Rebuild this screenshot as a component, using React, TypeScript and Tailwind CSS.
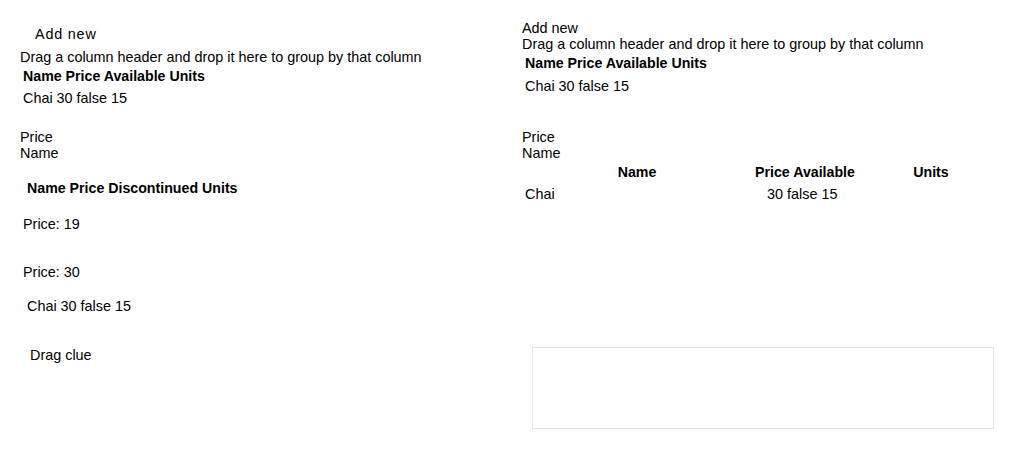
import React from 'react';

const columns = ['Name', 'Price', 'Available', 'Units'];

const App: React.FC = () => {
	return (
		<div className="min-h-screen bg-white px-[20px] text-[14.4px] leading-4 text-black [font-family:'Liberation_Sans',Arial,sans-serif]">
			{/* Top: toolbars + simple grids */}
			<div className="grid h-[129px] grid-cols-2 gap-x-[20px]">
				<div className="pt-[26px]">
					<button className="block pl-[15px] tracking-[0.8px]">Add new</button>
					<div className="mt-[7px]">Drag a column header and drop it here to group by that column</div>
					<div className="mt-[3px] pl-[3px] text-[14.2px] font-bold">{columns.join(' ')}</div>
					<div className="mt-[6px] pl-[3px]">Chai 30 false 15</div>
				</div>
				<div className="pt-[20px]">
					<button className="block">Add new</button>
					<div>Drag a column header and drop it here to group by that column</div>
					<div className="mt-[3px] pl-[3px] text-[14.2px] font-bold">{columns.join(' ')}</div>
					<div className="mt-[7px] pl-[3px]">Chai 30 false 15</div>
				</div>
			</div>

			{/* Middle: grouped grids */}
			<div className="grid h-[207px] grid-cols-2 gap-x-[20px]">
				<div>
					<div>Price</div>
					<div>Name</div>
					<div className="mt-[19px] pl-[7px] text-[14.2px] font-bold">Name Price Discontinued Units</div>
					<div className="mt-[20px] pl-[3px]">Price: 19</div>
					<div className="mt-[32px] pl-[3px]">Price: 30</div>
					<div className="mt-[18px] pl-[7px]">Chai 30 false 15</div>
				</div>
				<div>
					<div>Price</div>
					<div>Name</div>
					<div className="mt-[3px] grid grid-cols-[230px_106px_1fr] text-[14.2px] font-bold">
						<div className="text-center">Name</div>
						<div className="text-center">Price Available</div>
						<div className="text-center">Units</div>
					</div>
					<div className="mt-[6px] grid grid-cols-[230px_106px_1fr]">
						<div className="pl-[3px]">Chai</div>
						<div className="pl-[15px]">30 false 15</div>
						<div />
					</div>
				</div>
			</div>

			{/* Bottom: drag clue + drop area */}
			<div className="grid grid-cols-2 gap-x-[20px]">
				<div className="px-[10px] pt-[11px]">Drag clue</div>
				<div className="px-[10px] pt-[11px]">
					<div className="h-[82px] border border-[#e6e6e6]" />
				</div>
			</div>
		</div>
	);
};

export default App;
